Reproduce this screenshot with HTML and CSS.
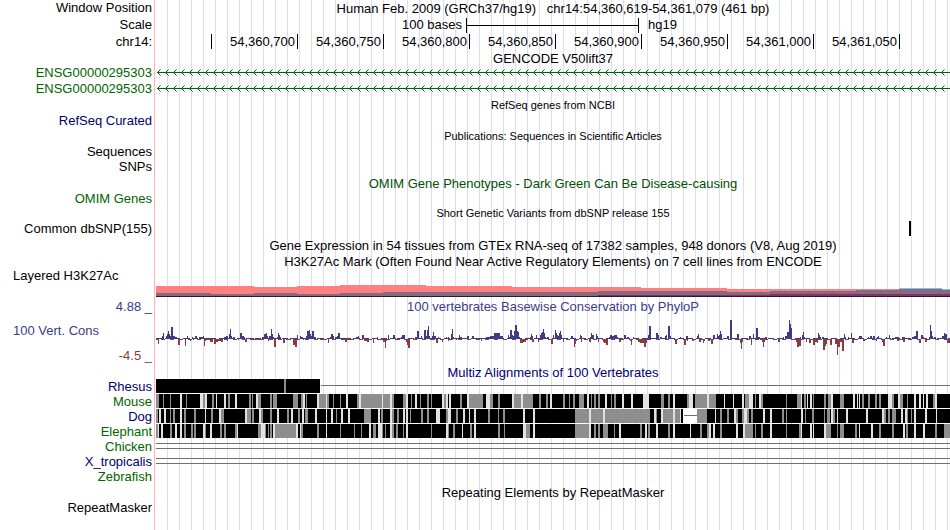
FILE: index.html
```html
<!DOCTYPE html>
<html lang="en">
<head>
  <meta charset="UTF-8">
  <title>Human chr14:54,360,619-54,361,079</title>
  <link rel="stylesheet" href="styles.css">
</head>
<body>

<main class="browser">
  <div class="row tall"><div class="label">Window Position</div><div class="title">Human Feb. 2009 (GRCh37/hg19) &nbsp; chr14:54,360,619-54,361,079 (461 bp)</div></div>
  <div class="row scale-row">
    <div class="label">Scale</div>
    <div class="scale">
      <span class="scale-left">100 bases</span>
      <span class="scale-bar"></span>
      <span class="scale-right">hg19</span>
    </div>
  </div>
  <div class="row tall">
    <div class="label">chr14:</div>
    <div class="ruler">
      <span></span>
      <span>54,360,700</span>
      <span>54,360,750</span>
      <span>54,360,800</span>
      <span>54,360,850</span>
      <span>54,360,900</span>
      <span>54,360,950</span>
      <span>54,361,000</span>
      <span>54,361,050</span>
    </div>
  </div>

  <div class="row"><div class="label"></div><div class="title">GENCODE V50lift37</div></div>
  <div class="row tall">
    <div class="label green">ENSG00000295303</div>
    <svg class="track" viewBox="0 0 794 16" preserveAspectRatio="none">
      <defs>
        <pattern id="arrows" width="8" height="16" patternUnits="userSpaceOnUse">
          <path d="M4.5 4.5L1.5 7.5L4.5 10.5" class="arrow"/>
        </pattern>
      </defs>
      <rect width="794" height="16" fill="url(#arrows)"/>
      <rect x="1" y="7" width="793" height="1" class="gene"/>
    </svg>
  </div>
  <div class="row tall">
    <div class="label green">ENSG00000295303</div>
    <svg class="track" viewBox="0 0 794 16" preserveAspectRatio="none">
      <rect width="794" height="16" fill="url(#arrows)"/>
      <rect x="1" y="7" width="793" height="1" class="gene"/>
    </svg>
  </div>

  <div class="row tall"><div class="label"></div><div class="title small">RefSeq genes from NCBI</div></div>
  <div class="row"><div class="label navy">RefSeq Curated</div></div>
  <div class="row tall"><div class="label"></div><div class="title small">Publications: Sequences in Scientific Articles</div></div>
  <div class="row"><div class="label">Sequences</div></div>
  <div class="row tall"><div class="label">SNPs</div></div>
  <div class="row tall"><div class="label"></div><div class="title green">OMIM Gene Phenotypes - Dark Green Can Be Disease-causing</div></div>
  <div class="row"><div class="label green">OMIM Genes</div></div>
  <div class="row"><div class="label"></div><div class="title small">Short Genetic Variants from dbSNP release 155</div></div>
  <div class="row tall">
    <div class="label">Common dbSNP(155)</div>
    <svg class="track" viewBox="0 0 794 16" preserveAspectRatio="none"><rect x="753" width="2" height="15"/></svg>
  </div>
  <div class="row tall"><div class="label"></div><div class="title">Gene Expression in 54 tissues from GTEx RNA-seq of 17382 samples, 948 donors (V8, Aug 2019)</div></div>
  <div class="row"><div class="label"></div><div class="title">H3K27Ac Mark (Often Found Near Active Regulatory Elements) on 7 cell lines from ENCODE</div></div>

  <div class="row mark-row">
    <div class="label left">Layered H3K27Ac</div>
    <svg class="track" viewBox="0 0 794 31" preserveAspectRatio="none">
      <path fill="#75c5f5" d="M743 29V20H786V21H794V29Z"/>
      <path fill="#ff8080" d="M0 29V18H98V19H141V18H184V17H270V18H356V19H485V20H571V21H743V29Z"/>
      <path fill="#846b80" d="M0 29V25H55V26H98V25H141V26H184V25H227V24H442V23H571V24H614V23H700V22H743V21H786V22H794V29Z"/>
      <path fill="#803368" d="M442 29V27H614V26H794V29Z"/>
      <path fill="#301828" d="M0 28H794V29H0Z"/>
    </svg>
  </div>

  <div class="row"><div class="label cons">4.88 _</div><div class="title cons">100 vertebrates Basewise Conservation by PhyloP</div></div>
  <div class="row cons-row">
    <div class="label cons-labels"><span class="cons">100 Vert. Cons</span><span class="minus">-4.5 _</span></div>
    <svg class="track" id="phylop" viewBox="0 0 794 50" preserveAspectRatio="none"></svg>
  </div>

  <div class="row"><div class="label"></div><div class="title navy">Multiz Alignments of 100 Vertebrates</div></div>
  <div class="row">
    <div class="label navy">Rhesus</div>
    <svg class="track" viewBox="0 0 794 15" preserveAspectRatio="none">
      <rect width="164" height="14"/>
      <rect x="128" width="2" height="14" class="mid"/>
      <rect x="165" y="6" width="629" height="1" class="gap"/>
    </svg>
  </div>
  <div class="row"><div class="label green">Mouse</div><svg class="track" id="mouse" viewBox="0 0 794 15" preserveAspectRatio="none"></svg></div>
  <div class="row"><div class="label navy">Dog</div><svg class="track" id="dog" viewBox="0 0 794 15" preserveAspectRatio="none"></svg></div>
  <div class="row"><div class="label green">Elephant</div><svg class="track" id="elephant" viewBox="0 0 794 15" preserveAspectRatio="none"></svg></div>
  <div class="row">
    <div class="label green">Chicken</div>
    <svg class="track" viewBox="0 0 794 15" preserveAspectRatio="none"><path class="gap" d="M0 4H794V5H0ZM0 9H794V10H0Z"/></svg>
  </div>
  <div class="row">
    <div class="label navy">X_tropicalis</div>
    <svg class="track" viewBox="0 0 794 15" preserveAspectRatio="none"><path class="gap" d="M0 4H794V5H0ZM0 9H794V10H0Z"/></svg>
  </div>
  <div class="row"><div class="label green">Zebrafish</div></div>
  <div class="row tall"><div class="label"></div><div class="title">Repeating Elements by RepeatMasker</div></div>
  <div class="row"><div class="label">RepeatMasker</div></div>
</main>

<script src="tracks.js"></script>
</body>
</html>
```

FILE: styles.css
```css
body {
  margin: 0;
  background-color: white;
  color: black;
  font-family: "Liberation Sans", Arial, Helvetica, sans-serif;
  font-size: 13px;
}
/* red line after the labels, then a guide line every 12px */
.browser {
  min-height: 100vh;
  background-image:
    linear-gradient(#ffb0b0, #ffb0b0),
    linear-gradient(white, white),
    linear-gradient(to right, #dcdcf8 1px, transparent 1px);
  background-size: 1px 100%, 156px 100%, 12px 100%;
  background-position: 154px 0, 0 0, 11px 0;
  background-repeat: no-repeat, no-repeat, repeat-x;
}
.row {
  display: grid;
  grid-template-columns: 152px 1fr;
  column-gap: 4px;
  height: 15px;
  line-height: 15px;
  white-space: nowrap;
}
.tall {
  height: 16px;
  line-height: 16px;
}
.label {
  text-align: right;
}
.left {
  text-align: left;
  padding-left: 13px;
}
.title {
  padding-top: 1px;
  text-align: center;
}
.title.small {
  padding-top: 0;
  font-size: 11px;
}
.green {
  color: #006400;
}
.title.green {
  color: #005000;
}
.navy {
  color: #000070;
}
.cons {
  color: #3c3c8c;
}
.title.cons {
  padding-top: 0;
}
.minus {
  color: #8c3c3c;
}
.track {
  display: block;
  width: 100%;
  height: 100%;
  overflow: visible;
  shape-rendering: crispEdges;
}

/* scale and ruler */
.scale-row {
  height: 18px;
  line-height: 18px;
}
.scale {
  display: grid;
  grid-template-columns: 310fr 173fr 311fr;
  align-items: center;
}
.scale-left {
  text-align: right;
  padding-right: 4px;
}
.scale-bar {
  height: 15px;
  border-left: 1px solid black;
  border-right: 1px solid black;
  background: linear-gradient(black, black) center / 100% 1px no-repeat;
}
.scale-right {
  padding-left: 9px;
}
.ruler {
  display: grid;
  grid-template-columns: 56fr repeat(8, 86fr) 50fr;
}
.ruler span {
  height: 15px;
  padding-right: 2px;
  border-right: 1px solid black;
  text-align: right;
}

/* tracks */
.gene {
  fill: #006400;
}
.arrow {
  fill: none;
  stroke: #006400;
  shape-rendering: auto;
}
.mark-row {
  height: 31px;
}
.cons-row {
  height: 50px;
}
.cons-labels {
  display: flex;
  flex-direction: column;
  justify-content: space-between;
  padding: 9px 0 1px 13px;
}
.cons-labels .cons {
  text-align: left;
}
.up {
  fill: #3c3c8c;
}
.down {
  fill: #8c3c3c;
}
.light {
  fill: #e2e2e2;
}
.mid {
  fill: #8e8e8e;
}
.gap {
  fill: #707070;
}
.blank {
  fill: white;
}
```

FILE: tracks.js
```js
const BASELINE = 25;

// x, width, height
const up = [
  3,3,1, 6,1,3, 7,1,6, 10,1,3, 11,1,5, 12,1,8, 13,1,5, 14,1,3, 15,2,12, 17,2,3, 19,2,2, 31,1,3, 32,2,1, 36,1,2, 39,2,3,
  43,5,2, 47,1,3, 51,3,1, 57,2,1, 66,1,1, 68,2,2, 70,2,3, 73,1,5, 74,1,10, 75,1,3, 77,2,2, 84,2,6, 86,2,3, 88,1,2, 96,2,1,
  106,2,2, 108,2,5, 110,1,6, 111,1,3, 113,2,3, 115,1,10, 116,1,5, 117,1,2, 121,1,2, 122,1,6, 123,1,4, 124,1,2, 126,3,1,
  134,2,1, 141,1,4, 144,1,3, 145,2,2, 148,1,1, 150,1,3, 151,2,8, 153,1,9, 154,1,5, 155,1,3, 156,2,8, 158,2,2, 161,4,1,
  174,1,2, 175,2,5, 177,1,3, 179,2,2, 181,1,3, 182,2,6, 186,3,1, 197,4,1, 200,2,2, 202,1,3, 206,2,4, 216,2,1, 221,1,2,
  232,1,4, 237,2,4, 239,1,1, 241,3,1, 245,1,2, 246,3,4, 255,2,1, 259,2,2, 261,2,8, 264,1,1, 265,1,3, 268,2,9, 270,1,3,
  271,1,9, 272,1,13, 273,1,3, 276,1,3, 277,1,7, 278,2,3, 282,1,2, 290,1,2, 292,1,2, 295,1,5, 296,1,10, 297,1,2, 302,1,1,
  303,1,4, 304,2,2, 307,3,1, 311,2,3, 316,2,3, 319,5,1, 327,4,1, 330,4,2, 334,4,3, 338,6,6, 344,3,3, 352,1,4, 353,1,2,
  354,2,9, 356,1,4, 357,1,3, 358,1,8, 359,2,14, 361,1,8, 362,1,7, 363,1,2, 374,1,2, 375,1,5, 376,1,3, 380,1,4, 384,1,4,
  385,1,6, 386,1,7, 387,1,10, 388,1,6, 389,1,2, 391,2,2, 397,1,4, 399,1,9, 400,1,6, 401,1,4, 402,1,3, 403,1,6, 404,1,8,
  405,1,4, 411,1,1, 415,2,3, 424,1,4, 425,1,3, 429,1,1, 434,1,2, 435,1,6, 436,2,4, 440,1,5, 441,1,3, 453,1,2, 454,2,4,
  456,2,3, 458,3,4, 461,1,2, 464,3,1, 468,2,4, 471,2,2, 477,1,2, 492,1,4, 493,2,13, 500,2,6, 502,1,4, 504,2,2, 509,1,3,
  510,1,4, 512,2,13, 514,1,3, 524,1,2, 530,2,3, 541,1,3, 542,1,5, 557,2,4, 561,1,5, 562,1,3, 563,1,4, 564,1,8, 565,1,5,
  568,2,1, 571,2,3, 574,2,19, 576,1,1, 581,2,5, 589,3,1, 593,2,3, 597,1,5, 600,2,11, 602,2,2, 609,2,2, 612,4,1, 627,1,2,
  629,2,3, 631,2,7, 633,1,19, 634,1,15, 635,1,11, 644,1,2, 646,1,4, 647,1,7, 648,1,2, 662,1,6, 663,1,4, 664,1,2, 666,2,2,
  688,1,5, 689,1,2, 692,1,2, 695,1,6, 696,1,1, 703,3,3, 712,1,2, 714,2,3, 717,2,3, 721,1,2, 722,1,3, 730,1,2, 733,1,4,
  736,3,1, 739,4,2, 746,3,2, 750,1,1, 753,2,1, 756,2,2, 758,2,3, 760,2,8, 765,2,4, 767,1,2, 773,1,2, 774,1,14, 775,1,8,
  776,1,3, 778,2,2, 781,2,1, 784,2,1, 786,2,3, 788,1,6, 789,2,5
];
const down = [
  0,2,1, 2,1,5, 22,2,6, 25,2,1, 29,1,7, 34,1,2, 37,1,1, 48,1,7, 49,1,2, 54,3,3, 58,2,5, 60,2,3, 62,3,2, 65,2,3, 71,1,2,
  79,1,1, 82,1,1, 89,2,3, 94,1,1, 98,8,1, 112,1,2, 118,2,8, 127,2,4, 130,1,1, 137,2,6, 139,2,8, 147,1,1, 164,7,1, 172,1,4,
  189,2,3, 191,5,1, 208,3,2, 211,2,3, 214,2,1, 217,1,4, 222,1,1, 225,2,1, 227,2,3, 229,1,9, 230,1,2, 242,2,1, 250,1,3,
  251,1,6, 252,2,9, 274,2,1, 280,2,4, 286,1,3, 292,1,2, 300,1,1, 325,1,2, 347,2,1, 364,3,4, 367,3,3, 370,2,1, 376,2,3,
  382,1,3, 395,2,5, 407,1,3, 412,2,1, 418,1,8, 419,1,5, 420,1,2, 425,1,3, 433,2,3, 442,1,3, 447,1,3, 448,2,4, 450,2,6,
  463,2,3, 474,1,2, 475,1,6, 480,2,1, 482,2,3, 484,4,4, 488,2,8, 490,1,4, 519,2,5, 528,2,6, 531,1,2, 536,2,2, 543,2,3,
  547,1,4, 548,1,2, 552,2,2, 555,2,5, 579,2,1, 584,1,4, 585,1,10, 586,1,3, 595,1,6, 604,2,1, 606,1,3, 607,1,8, 608,1,3,
  622,2,3, 638,2,1, 640,1,3, 641,2,8, 643,2,7, 650,1,3, 653,2,4, 657,2,6, 659,2,3, 661,1,4, 667,2,11, 669,1,7, 670,1,5,
  674,2,6, 679,2,5, 681,1,16, 682,2,8, 684,2,3, 686,2,12, 696,2,4, 707,2,2, 720,1,2, 726,1,3, 727,2,7, 741,2,2, 747,2,3,
  763,2,4, 769,2,3, 791,3,4
];

// x, width
const alignments = {
  mouse: {
    mid: [0,3, 7,1, 14,1, 30,1, 47,2, 56,2, 72,2, 93,2, 96,1, 102,3, 114,2, 117,4, 137,5, 145,2, 150,1, 163,7, 171,2, 177,1,
      184,1, 201,2, 205,21, 227,7, 236,2, 247,3, 255,1, 264,1, 271,2, 275,1, 288,2, 304,2, 313,14, 334,3, 342,2, 358,7,
      367,10, 383,2, 390,2, 407,2, 413,1, 417,2, 423,5, 435,1, 438,2, 442,2, 455,1, 458,2, 505,3, 512,2, 531,2, 539,12,
      553,7, 589,4, 599,1, 605,2, 630,1, 641,4, 648,2, 657,1, 668,2, 672,3, 684,4, 706,2, 712,2, 719,2, 723,2, 736,2,
      744,3, 751,1, 777,2],
    light: [24,2, 44,3, 49,2, 60,1, 68,2, 79,2, 100,2, 147,2, 161,2, 170,1, 190,2, 203,2, 226,1, 234,2, 250,2, 259,2, 286,2,
      290,2, 293,2, 311,2, 330,4, 356,2, 365,2, 394,2, 431,2, 449,2, 466,2, 475,2, 487,6, 517,2, 533,4, 551,2, 568,1,
      577,1, 586,2, 593,4, 603,2, 645,1, 651,1, 654,2, 675,2, 697,2, 701,1, 703,1, 732,4, 742,2, 758,2, 763,2, 767,1,
      770,2, 779,2]
  },
  dog: {
    mid: [0,2, 14,1, 17,2, 28,2, 38,2, 55,2, 65,3, 91,4, 96,2, 105,2, 114,2, 131,2, 142,2, 149,3, 180,1, 208,7, 225,2, 236,2,
      241,2, 254,1, 265,2, 271,2, 290,2, 300,2, 332,2, 342,1, 347,2, 419,14, 435,12, 449,45, 500,1, 507,18, 541,10, 564,2,
      571,2, 580,2, 586,2, 591,2, 595,2, 626,2, 630,1, 649,1, 656,2, 668,1, 671,3, 677,2, 728,2, 732,2, 736,4, 751,1, 755,1],
    light: [3,2, 8,2, 24,2, 49,1, 63,2, 89,2, 103,2, 121,2, 135,2, 146,2, 159,2, 170,1, 175,2, 185,2, 192,2, 222,2, 234,2,
      247,2, 250,2, 280,4, 292,3, 307,2, 313,1, 318,2, 367,2, 377,2, 433,2, 447,2, 498,2, 505,2, 517,2, 524,1, 559,1,
      578,2, 588,3, 607,2, 614,2, 645,2, 675,2, 681,1, 690,2, 710,2, 726,2, 745,2, 749,2, 758,2, 769,2, 780,1],
    blank: [527,14]
  },
  elephant: {
    mid: [0,2, 14,2, 28,2, 35,2, 38,2, 49,1, 64,2, 68,2, 79,2, 102,3, 109,1, 112,1, 114,2, 119,21, 145,2, 161,2, 184,1, 198,1,
      205,1, 217,3, 226,1, 229,1, 236,2, 240,2, 247,1, 275,1, 292,1, 297,2, 314,2, 342,2, 348,1, 370,4, 419,14, 438,2,
      442,2, 447,5, 458,1, 484,2, 492,2, 512,2, 544,2, 551,2, 564,2, 589,8, 599,1, 605,2, 630,1, 643,2, 670,5, 681,1,
      684,4, 699,2, 723,2, 736,2, 750,2, 779,2, 788,6],
    light: [2,1, 5,2, 19,2, 24,2, 47,2, 54,2, 81,1, 105,4, 117,2, 140,2, 144,1, 170,1, 213,2, 222,4, 234,2, 250,2, 290,2,
      306,1, 318,2, 367,3, 377,2, 433,2, 463,2, 489,2, 500,2, 517,2, 534,1, 553,2, 557,2, 580,2, 587,2, 614,2, 645,1,
      654,2, 657,1, 668,2, 703,1, 715,2, 747,2, 758,2, 767,2]
  }
};

function addRect(svg, cls, x, y, w, h) {
  const rect = document.createElementNS("http://www.w3.org/2000/svg", "rect");
  rect.setAttribute("class", cls);
  rect.setAttribute("x", x);
  rect.setAttribute("y", y);
  rect.setAttribute("width", w);
  rect.setAttribute("height", h);
  svg.appendChild(rect);
}

const phylop = document.getElementById("phylop");
// scores close to zero still show as a thin line
for (let x = 0; x < 794; x += 9) {
  addRect(phylop, "up", x, BASELINE - 1, 6, 1);
  addRect(phylop, "down", x + 5, BASELINE, 4, 1);
}
for (let i = 0; i < up.length; i += 3) {
  addRect(phylop, "up", up[i], BASELINE - up[i + 2], up[i + 1], up[i + 2]);
}
for (let i = 0; i < down.length; i += 3) {
  addRect(phylop, "down", down[i], BASELINE, down[i + 1], down[i + 2]);
}

for (const name in alignments) {
  const svg = document.getElementById(name);
  addRect(svg, "base", 0, 0, 794, 14);
  for (const shade in alignments[name]) {
    const bars = alignments[name][shade];
    for (let i = 0; i < bars.length; i += 2) {
      addRect(svg, shade, bars[i], 0, bars[i + 1], 14);
    }
  }
}
addRect(document.getElementById("dog"), "gap", 528, 6, 13, 1);
```
